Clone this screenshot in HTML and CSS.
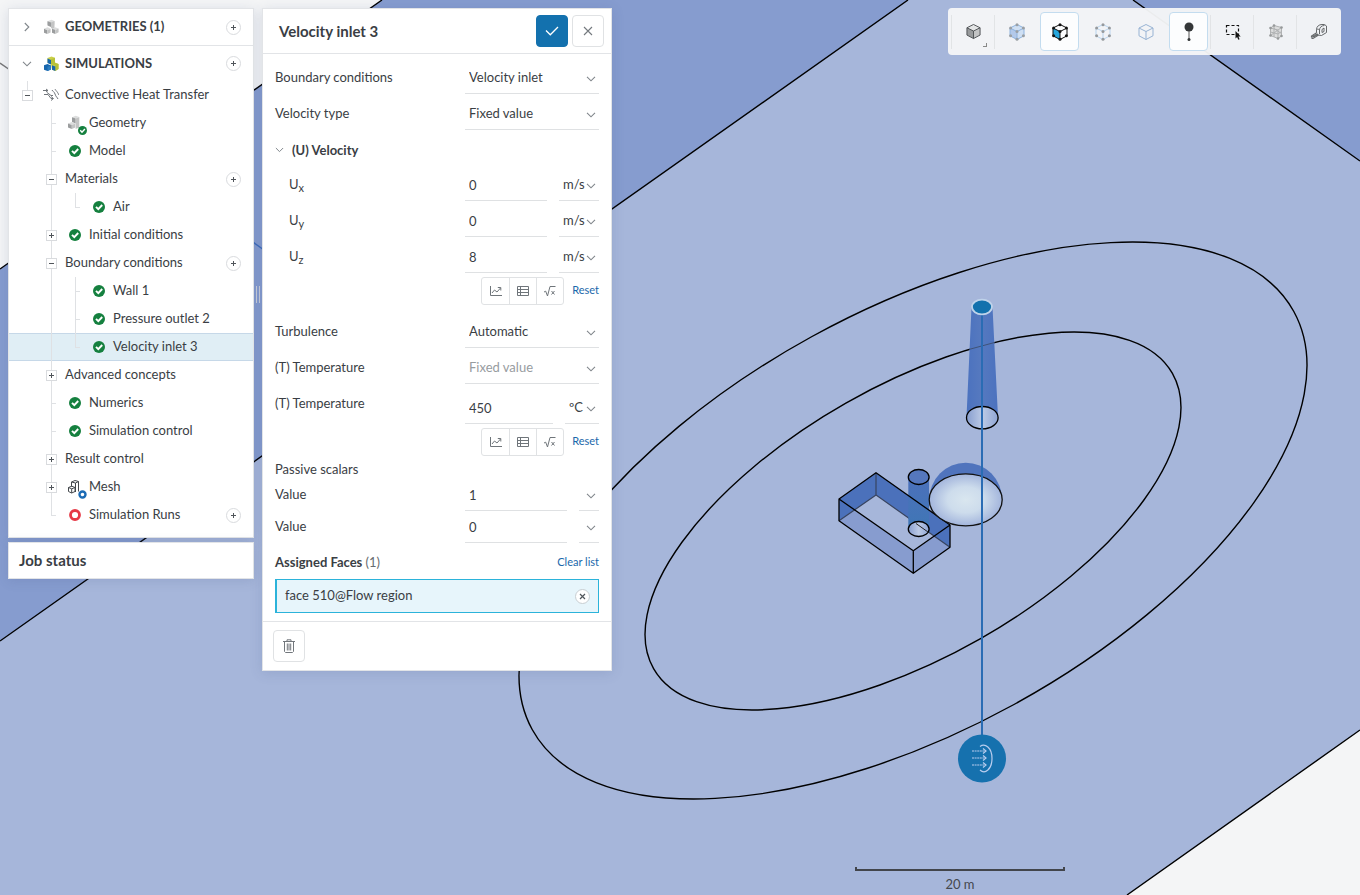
FILE: index.html
```html
<!DOCTYPE html>
<html lang="en">
<head>
<meta charset="utf-8">
<meta name="viewport" content="width=device-width, initial-scale=1">
<title>Simulation setup</title>
<link rel="stylesheet" href="styles.css">
</head>
<body>
<svg class="defs" width="0" height="0" aria-hidden="true">
  <symbol id="chev" viewBox="0 0 10 6"><path d="M1 .8l4 4 4-4" fill="none" stroke="#80868b" stroke-width="1.1"/></symbol>
  <symbol id="plus" viewBox="0 0 5 5"><path d="M2.500 0v5M0 2.500h5" fill="none" stroke="#50555a"/></symbol>
  <symbol id="ok" viewBox="0 0 12 12"><circle cx="6" cy="6" r="6" fill="#15803f"/><path d="M3 5.800l2.300 2.400 3.900-4.200" fill="none" stroke="#fff" stroke-width="1.900"/></symbol>
  <symbol id="cubes" viewBox="0 0 16 16">
    <path class="c-top" d="M4.500 2.200L8.500.8l3 1.200v3.500l-3.500 1.500-3.500-1.300z"/>
    <path class="c-a" d="M4.500 2.200l3.500 1.300v4.500l-3.500-1.400z"/>
    <path class="c-b" d="M8 3.500L11.500 2v9L8 9z"/>
    <path class="c-top" d="M1 9.700l3.600-1.400 3 1.400-3.300 1.500zM9 9.700l3-1.400 3.600 1.200-3.300 1.600z"/>
    <path class="c-a" d="M1 9.700l3.300 1.500V15L1 13.800zM9 9.700l3.300 1.400V15L9 13.700z"/>
    <path class="c-b" d="M4.300 11.200l3.300-1.500v3.800L4.300 15zM12.300 11.100l3.300-1.600v3.800L12.300 15z"/>
  </symbol>
  <symbol id="sims" viewBox="0 0 16 16">
    <path d="M4.500 2L8.500.5l3.500 1.300v4.700l3.500 1.500v5L12.300 15 9 13.700 8 8.500 4.500 6.500z" fill="#cbd04a"/>
    <path d="M8 3.300L12 1.800V7l3.500 1v5L12.300 15V9.500L8 8z" fill="#b7c139"/>
    <path d="M4.500 2.600L8 4v4.600L4.500 7z" fill="#1766ad"/>
    <path d="M1 9.300L4.500 8l3.500 1.500v4L4.500 15 1 13.700z" fill="#1766ad"/>
    <path d="M4.500 10.800L8 9.500v4L4.500 15z" fill="#2b7dc0"/>
    <path d="M9 9.300l3.300 1.300V15L9 13.700z" fill="#1766ad"/>
  </symbol>
  <symbol id="geo" viewBox="0 0 16 16">
    <path class="c-top" d="M5 2.200L8.700.8l3.600 1.200-3.600 1.500z"/>
    <path class="c-a" d="M5 2.200l3.700 1.300v5L5 7z"/>
    <path class="c-b" d="M8.700 3.500L12.300 2v10.500L8.700 14z"/>
    <path class="c-top" d="M1 8.500L4.800 7l3.500 1.500-3.500 1.600z"/>
    <path class="c-a" d="M1 8.500l3.800 1.600v4L1 12.600z"/>
    <path class="c-b" d="M4.800 10.100l3.500-1.600v4l-3.500 1.600z"/>
  </symbol>
  <symbol id="chart" viewBox="0 0 14 12"><path d="M1.500 1v9.500H13" fill="none" stroke="#6f757a"/><path d="M3 8l2.500-3L8 7l3.500-4M8.800 2.500h3v3" fill="none" stroke="#6f757a"/></symbol>
  <symbol id="table" viewBox="0 0 14 12"><path d="M1.500 1.500h11v9h-11zM1.500 4.500h11M1.500 7.500h11M4.500 1.500v9" fill="none" stroke="#6f757a"/></symbol>
  <symbol id="root" viewBox="0 0 14 12"><path d="M1 7l1.700-.8L4.500 11 7 1.500h5.500M8.500 6l3 3.500M11.500 6l-3 3.500" fill="none" stroke="#6f757a"/></symbol>
  <symbol id="wire" viewBox="0 0 16 18"><path d="M8 1.500l7 3.500v7.800L8 16.500 1 12.800V5zM1 5l7 3.500L15 5M8 8.500v8" fill="none" stroke="currentColor"/></symbol>
  <symbol id="dots" viewBox="0 0 16 18"><g fill="currentColor"><circle cx="8" cy="1.700" r="1.500"/><circle cx="14.400" cy="5" r="1.500"/><circle cx="14.400" cy="12.700" r="1.500"/><circle cx="8" cy="16.300" r="1.500"/><circle cx="1.600" cy="12.700" r="1.500"/><circle cx="1.600" cy="5" r="1.500"/><circle cx="8" cy="8.500" r="1.500"/></g></symbol>
</svg>

<main class="workspace">
  <svg class="scene" viewBox="0 0 1360 895" preserveAspectRatio="xMidYMid slice" role="img" aria-label="3D model of the flow region">
    <defs>
      <radialGradient id="dome"><stop offset="0" stop-color="#d9e6ef"/><stop offset=".5" stop-color="#cddcec"/><stop offset="1" stop-color="#a3b5dc"/></radialGradient>
      <linearGradient id="pipe"><stop offset="0" stop-color="#879ecf"/><stop offset=".5" stop-color="#bccae5"/><stop offset="1" stop-color="#8fa5d4"/></linearGradient>
      <linearGradient id="stack"><stop offset="0" stop-color="#4b72bf"/><stop offset=".45" stop-color="#5679bf"/><stop offset="1" stop-color="#4b72bf"/></linearGradient>
      <linearGradient id="tube" x2="0" y2="1"><stop offset="0" stop-color="#4b70bb"/><stop offset=".5" stop-color="#4574b8"/><stop offset="1" stop-color="#3c77b4"/></linearGradient>
    </defs>
    <rect width="1360" height="895" fill="#f4f5f6"/>
    <path d="M0 269L382 0h978v730l-233 165H0z" fill="#869ccf"/>
    <path d="M0 641L908 0h225l227 161v569l-233 165H0z" fill="#a6b6da"/>
    <path d="M0 63l10 7" stroke="#777" stroke-width="1.500"/>
    <path d="M250 240l14 10" stroke="#3d6cba" stroke-width="1.500"/>
    <g fill="none" stroke="#000" stroke-width="1.400">
      <path d="M0 269L382 0M0 641L908 0M1133 0l227 161M1127 895l233-165"/>
      <ellipse cx="913" cy="520.500" rx="434.400" ry="209.900" transform="rotate(-28.760 913 520.500)"/>
      <ellipse cx="913" cy="521" rx="298.500" ry="135.700" transform="rotate(-29.650 913 521)"/>
    </g>
    <path d="M971.500 307L966.500 417a16 11.300 0 0 1 31.500 0L992.500 307z" fill="url(#stack)"/>
    <path d="M969.500 349.300L994.500 342.500" fill="none" stroke="#3f5378"/>
    <ellipse cx="982.300" cy="417.700" rx="15.800" ry="11.200" fill="url(#pipe)" stroke="#000" stroke-width="1.300"/>
    <path d="M839 499v21.700l74.300 52.600V550.700zM913.300 550.700v22.600L950 547.300V525z" fill="#879ccf"/>
    <path d="M839 499l37-26.300V495l-37 25.700zM876 472.700L950 525v22.300L876 495z" fill="#4b71bb"/>
    <path d="M876 473v22l74 52.300M876 495l-37 25.700" fill="none" stroke="#38445f" stroke-width="1.200"/>
    <path d="M908.300 477v52a10.400 7.500 0 0 0 20.800 0v-52z" fill="url(#tube)"/>
    <ellipse cx="918.700" cy="529" rx="10.400" ry="7.500" fill="url(#pipe)" stroke="#000" stroke-width="1.300"/>
    <path d="M916 523.500l12 8.500" stroke="#222"/>
    <ellipse cx="918.700" cy="477" rx="10.400" ry="7.500" fill="#5577bd" stroke="#000" stroke-width="1.300"/>
    <path d="M839 499v21.700l74.300 52.600L950 547.300V525l-74-52.300L839 499l74.300 51.700L950 525M913.300 550.700v22.600" fill="none" stroke="#000" stroke-width="1.300" stroke-linejoin="round"/>
    <path d="M929.200 500a36.500 37.300 0 0 1 73 0z" fill="#5074bd"/>
    <ellipse cx="965.700" cy="499.800" rx="36.500" ry="26" fill="url(#dome)" stroke="#111" stroke-width="1.300"/>
    <path d="M982 306v430" stroke="#2a6cb4" stroke-width="2"/>
    <ellipse cx="982" cy="307" rx="10" ry="7.300" fill="#1271ad" stroke="#bfd3ea" stroke-width="1.800"/>
    <circle cx="982" cy="758.500" r="24" fill="#1671ae"/>
    <g fill="none" stroke="#b9cdee" stroke-width="1.200">
      <path d="M980 746.500c5-3.500 12 1 12 12s-7 16-12 11.500"/>
      <path d="M972 751h14M972 758h14M972 765h14" stroke-dasharray="2 .6"/>
      <path d="M983 748.500l3 2.500-3 2.500M983 755.500l3 2.500-3 2.500M983 762.500l3 2.500-3 2.500"/>
    </g>
    <path d="M856 867v3h208v-3" fill="none" stroke="#42454b" stroke-width="2"/>
    <text class="scale-text" x="960" y="889" text-anchor="middle">20 m</text>
  </svg>

  <div class="overlay">
    <aside class="side">
      <nav class="panel tree" aria-label="Project tree">
        <div class="head first"><span class="cell"><svg class="turn" width="10" height="6"><use href="#chev"/></svg></span><span class="cell"><svg class="grey" width="16" height="16"><use href="#cubes"/></svg></span><b>GEOMETRIES (1)</b><button class="add" aria-label="Add geometry"><svg width="5" height="5"><use href="#plus"/></svg></button></div>
        <div class="head"><span class="cell"><svg width="10" height="6"><use href="#chev"/></svg></span><span class="cell"><svg width="16" height="16"><use href="#sims"/></svg></span><b>SIMULATIONS</b><button class="add" aria-label="Add simulation"><svg width="5" height="5"><use href="#plus"/></svg></button></div>
        <div class="row"><span class="cell up"><button class="tog" aria-label="Collapse"></button></span><span class="cell"><svg width="16" height="14" viewBox="0 0 16 14" fill="none" stroke="#70757a"><path d="M0 2.500h5M3 1l2 1.500L3 4M1 6.500h4l3 4h2M8 8.500l2.500 2L8 12.500M4 4.500l4 3h2M9 2c1 2 2 1 3 4s2 3 3 5M12 1c1 2 2 2 4 6"/></svg></span><span>Convective Heat Transfer</span></div>
        <div class="row"><span class="cell"></span><span class="cell line tee"></span><span class="cell badge-host"><svg class="grey" width="16" height="16"><use href="#geo"/></svg><svg class="badge" width="9" height="9"><use href="#ok"/></svg></span><span>Geometry</span></div>
        <div class="row"><span class="cell"></span><span class="cell line tee"></span><span class="cell"><svg width="12" height="12"><use href="#ok"/></svg></span><span>Model</span></div>
        <div class="row"><span class="cell"></span><span class="cell line"><button class="tog" aria-label="Collapse"></button></span><span>Materials</span><button class="add" aria-label="Add material"><svg width="5" height="5"><use href="#plus"/></svg></button></div>
        <div class="row"><span class="cell"></span><span class="cell line"></span><span class="cell end"></span><span class="cell"><svg width="12" height="12"><use href="#ok"/></svg></span><span>Air</span></div>
        <div class="row"><span class="cell"></span><span class="cell line"><button class="tog more" aria-label="Expand"></button></span><span class="cell"><svg width="12" height="12"><use href="#ok"/></svg></span><span>Initial conditions</span></div>
        <div class="row"><span class="cell"></span><span class="cell line"><button class="tog" aria-label="Collapse"></button></span><span>Boundary conditions</span><button class="add" aria-label="Add boundary condition"><svg width="5" height="5"><use href="#plus"/></svg></button></div>
        <div class="row"><span class="cell"></span><span class="cell line"></span><span class="cell line tee"></span><span class="cell"><svg width="12" height="12"><use href="#ok"/></svg></span><span>Wall 1</span></div>
        <div class="row"><span class="cell"></span><span class="cell line"></span><span class="cell line tee"></span><span class="cell"><svg width="12" height="12"><use href="#ok"/></svg></span><span>Pressure outlet 2</span></div>
        <div class="row selected"><span class="cell"></span><span class="cell line"></span><span class="cell end"></span><span class="cell"><svg width="12" height="12"><use href="#ok"/></svg></span><span>Velocity inlet 3</span></div>
        <div class="row"><span class="cell"></span><span class="cell line"><button class="tog more" aria-label="Expand"></button></span><span>Advanced concepts</span></div>
        <div class="row"><span class="cell"></span><span class="cell line tee"></span><span class="cell"><svg width="12" height="12"><use href="#ok"/></svg></span><span>Numerics</span></div>
        <div class="row"><span class="cell"></span><span class="cell line tee"></span><span class="cell"><svg width="12" height="12"><use href="#ok"/></svg></span><span>Simulation control</span></div>
        <div class="row"><span class="cell"></span><span class="cell line"><button class="tog more" aria-label="Expand"></button></span><span>Result control</span></div>
        <div class="row"><span class="cell"></span><span class="cell line"><button class="tog more" aria-label="Expand"></button></span><span class="cell badge-host"><svg width="16" height="16" viewBox="0 0 16 16" fill="none" stroke="#45494d"><path d="M4.500 3L8 1.500l3.500 1L8.500 4zM4.500 3v4.500M8.500 4v9M11.500 2.500v10M1.500 8.500l3.300-1.300L8 8.500l-3.300 1.300zM1.500 8.500v4l3.200 1.500V9.800M4.700 14L8 12.500v-4"/></svg><svg class="badge" width="9" height="9" viewBox="0 0 9 9"><circle cx="4.500" cy="4.500" r="3" fill="#fff" stroke="#1b6bb5" stroke-width="2.400"/></svg></span><span>Mesh</span></div>
        <div class="row"><span class="cell"></span><span class="cell end"></span><span class="cell"><svg width="12" height="12" viewBox="0 0 12 12"><circle cx="6" cy="6" r="4.500" fill="#fff" stroke="#e63946" stroke-width="2.800"/></svg></span><span>Simulation Runs</span><button class="add" aria-label="Add run"><svg width="5" height="5"><use href="#plus"/></svg></button></div>
      </nav>
      <section class="panel job"><h2>Job status</h2></section>
    </aside>
    <div class="splitter" role="separator"></div>

    <form class="panel dialog">
      <header class="dialog-head">
        <h1>Velocity inlet 3</h1>
        <button type="button" class="square primary" aria-label="Apply"><svg width="14" height="10" viewBox="0 0 14 10"><path d="M1 4.500l4.300 4.300L13 1" fill="none" stroke="#fff" stroke-width="1.300"/></svg></button>
        <button type="button" class="square" aria-label="Close"><svg width="10" height="10" viewBox="0 0 10 10"><path d="M1 1l8 8M9 1L1 9" fill="none" stroke="#74797e" stroke-width="1.100"/></svg></button>
      </header>
      <div class="fields">
        <div class="field"><label for="bc">Boundary conditions</label><div class="control"><span class="pick"><select id="bc"><option>Velocity inlet</option></select><svg width="10" height="6"><use href="#chev"/></svg></span></div></div>
        <div class="field"><label for="vt">Velocity type</label><div class="control"><span class="pick"><select id="vt"><option>Fixed value</option></select><svg width="10" height="6"><use href="#chev"/></svg></span></div></div>
        <h3 class="group"><svg width="9" height="6"><use href="#chev"/></svg>(U) Velocity</h3>
        <div class="field nested"><label for="ux">U<sub>x</sub></label><div class="control"><input id="ux" value="0"><span class="pick unit"><select aria-label="Ux unit"><option>m/s</option></select><svg width="10" height="6"><use href="#chev"/></svg></span></div></div>
        <div class="field nested"><label for="uy">U<sub>y</sub></label><div class="control"><input id="uy" value="0"><span class="pick unit"><select aria-label="Uy unit"><option>m/s</option></select><svg width="10" height="6"><use href="#chev"/></svg></span></div></div>
        <div class="field nested"><label for="uz">U<sub>z</sub></label><div class="control"><input id="uz" value="8"><span class="pick unit"><select aria-label="Uz unit"><option>m/s</option></select><svg width="10" height="6"><use href="#chev"/></svg></span></div></div>
        <div class="tools gap-after"><div class="seg"><button type="button" aria-label="Chart"><svg width="14" height="12"><use href="#chart"/></svg></button><button type="button" aria-label="Table"><svg width="14" height="12"><use href="#table"/></svg></button><button type="button" aria-label="Formula"><svg width="14" height="12"><use href="#root"/></svg></button></div><a href="#">Reset</a></div>
        <div class="field"><label for="tu">Turbulence</label><div class="control"><span class="pick"><select id="tu"><option>Automatic</option></select><svg width="10" height="6"><use href="#chev"/></svg></span></div></div>
        <div class="field"><label for="tt">(T) Temperature</label><div class="control"><span class="pick"><select id="tt" disabled><option>Fixed value</option></select><svg width="10" height="6"><use href="#chev"/></svg></span></div></div>
        <div class="field tall"><label for="tv">(T) Temperature</label><div class="control"><input id="tv" value="450"><span class="pick unit-c"><select aria-label="Temperature unit"><option>ºC</option></select><svg width="10" height="6"><use href="#chev"/></svg></span></div></div>
        <div class="tools"><div class="seg"><button type="button" aria-label="Chart"><svg width="14" height="12"><use href="#chart"/></svg></button><button type="button" aria-label="Table"><svg width="14" height="12"><use href="#table"/></svg></button><button type="button" aria-label="Formula"><svg width="14" height="12"><use href="#root"/></svg></button></div><a href="#">Reset</a></div>
        <p class="subhead">Passive scalars</p>
        <div class="field short"><label for="p1">Value</label><div class="control"><input id="p1" value="1"><span class="pick unit-none"><select aria-label="Unit"><option></option></select><svg width="10" height="6"><use href="#chev"/></svg></span></div></div>
        <div class="field short"><label for="p2">Value</label><div class="control"><input id="p2" value="0"><span class="pick unit-none"><select aria-label="Unit"><option></option></select><svg width="10" height="6"><use href="#chev"/></svg></span></div></div>
        <div class="assigned"><h3>Assigned Faces <span>(1)</span></h3><a href="#">Clear list</a></div>
        <div class="chip"><span>face 510@Flow region</span><button type="button" class="remove" aria-label="Remove face"><svg width="7" height="7" viewBox="0 0 7 7"><path d="M1 1l5 5M6 1L1 6" fill="none" stroke="#50565b" stroke-width="1.200"/></svg></button></div>
      </div>
      <footer class="dialog-foot"><button type="button" class="square" aria-label="Delete"><svg width="12" height="14" viewBox="0 0 12 14" fill="none" stroke="#72777c"><path d="M0 2.500h12M4 2V.8h4V2M1.500 2.500v10l1 1h7l1-1v-10M4.300 4.500v7M6 4.500v7M7.700 4.500v7"/></svg></button></footer>
    </form>

    <div class="toolbar" role="toolbar" aria-label="View tools">
      <div class="slot sep"><button class="tool corner" aria-label="Shading"><svg width="15" height="17" viewBox="0 0 16 18"><path d="M8 1.500L15 5 8 8.500 1 5z" fill="#e4e5e6"/><path d="M1 5l7 3.500v8L1 12.800z" fill="#989a9c"/><path d="M15 5L8 8.500v8l7-3.700z" fill="#c2c3c4"/><g color="#4c4f52"><use href="#wire"/></g></svg></button></div>
      <div class="slot sep"><button class="tool" aria-label="Select volumes"><svg width="16" height="18"><path d="M8 1.500l7 3.500v7.800L8 16.500 1 12.800V5z" fill="#cfdff3"/><path d="M1 5l7 3.500v8l-7-3.700z" fill="#b3c9ea"/><g color="#8eb3df"><use href="#wire"/></g><g color="#9a9fa4"><use href="#dots"/></g></svg></button></div>
      <div class="slot"><button class="tool active" aria-label="Select faces"><svg width="16" height="18"><path d="M1 5l7 3.500v8l-7-3.700z" fill="#25a6dc"/><g color="#111"><use href="#wire"/><use href="#dots"/></g></svg></button></div>
      <div class="slot"><button class="tool" aria-label="Select edges"><svg width="16" height="18"><g color="#b9d4ee"><use href="#wire"/></g><g color="#96999c"><use href="#dots"/></g></svg></button></div>
      <div class="slot"><button class="tool" aria-label="Select vertices"><svg width="16" height="18"><g color="#98b3d4"><use href="#wire"/></g></svg></button></div>
      <div class="slot"><button class="tool active" aria-label="Pins"><svg width="10" height="20" viewBox="0 0 10 20"><circle cx="5" cy="5" r="4.500" fill="#333638"/><path d="M5 9v8" stroke="#555"/><circle cx="5" cy="17.500" r="1.500" fill="#333638"/></svg></button></div>
      <div class="slot sep late"><button class="tool" aria-label="Box select"><svg width="16" height="16" viewBox="0 0 16 16"><path d="M1.500 1.500h12v9h-12z" fill="none" stroke="#111" stroke-width="1.200" stroke-dasharray="3 2"/><path d="M10.500 7v7.500l1.600-1.500 1.200 2.800 1.300-.6-1.200-2.700h2.300z" fill="#111"/></svg></button></div>
      <div class="slot sep"><button class="tool" aria-label="Mesh clip"><svg width="14" height="16" viewBox="0 0 14 16"><path d="M1.500 4L5 1.500l7.500 2v8.500L9 14.500l-7.500-3z" fill="#dcdddd"/><path d="M1.500 4L5 1.500l7.500 2L9 6zM1.500 4v7.500l7.500 3V6M12.500 3.500V12L9 14.500M5 1.500v11.500M1.500 8L9 10l3.500-2.500M1.500 11.500L9 6M5 4.500l7.500 5" fill="none" stroke="#b0b2b3"/><g fill="#96999a"><circle cx="1.500" cy="4" r="1.300"/><circle cx="5" cy="1.500" r="1.300"/><circle cx="12.500" cy="3.500" r="1.300"/><circle cx="9" cy="14.500" r="1.300"/><circle cx="1.500" cy="11.500" r="1.300"/><circle cx="12.500" cy="12" r="1.300"/></g></svg></button></div>
      <div class="slot sep"><button class="tool" aria-label="Measure"><svg width="18" height="18" viewBox="0 0 18 18" fill="none" stroke="#66696b"><path d="M6.500 9.500V6.500C6.500 3.500 9 1.500 12 1.500h2.500l2 1.500v6.500l-5 3-3.500-.5M6.500 6.500c1-.5 2-.5 3 .5M9.500 11V7c0-2.500 2-4.500 5-4.500"/><path d="M12 6.500l2-1.500v3.500l-2 1z"/><path d="M7 9.500L1.500 13v1.500M8.500 12L3 15.500H1.500M3.500 12l1.500 2.500M5.500 10.800L7 13M1.500 14.500L8 11" stroke-width="1.200"/></svg></button></div>
    </div>
  </div>
</main>
</body>
</html>
```
FILE: styles.css
```css
* { box-sizing: border-box; }
body { margin: 0; font: 13px/20px Lato, "Liberation Sans", sans-serif; color: #3a3e44; }
button, input, select { font: inherit; color: inherit; margin: 0; padding: 0; border: 0; background: none; border-radius: 0; }
h1, h2, h3, p { margin: 0; font-size: inherit; }
a { color: #1a68ab; text-decoration: none; font-size: 11px; }
svg { display: block; flex: none; }
.defs { position: absolute; }

.workspace { position: relative; min-height: 100vh; overflow: hidden; }
.scene { position: absolute; inset: 0; width: 100%; height: 100%; }
.scale-text { font-size: 13px; fill: #44474c; }
.overlay { position: relative; display: flex; align-items: flex-start; padding: 8px 19px 8px 8px; }
.panel { background: #fff; border: 1px solid #e2e4e7; box-shadow: 0 2px 12px rgba(60, 80, 130, .16); }

/* project tree */
.side { width: 246px; display: grid; gap: 4px; }
.tree { padding-bottom: 8px; }
.head, .row { display: flex; align-items: center; padding: 0 12px 0 6px; }
.head { height: 35px; }
.head.first { height: 37px; border-bottom: 1px solid #e2e4e7; }
.head b { padding: 0 0 2px 2px; }
.row { height: 28px; line-height: 26px; }
.row > span:not(.cell) { padding: 0 0 2px 2px; }
.cell { width: 24px; align-self: stretch; flex: none; display: grid; place-items: center; }
.cell.line { background: linear-gradient(#dfe1e4, #dfe1e4) 12px 0 / 1px 100% no-repeat; }
.cell.tee { background: linear-gradient(#dfe1e4, #dfe1e4) 12px 0 / 1px 100% no-repeat, linear-gradient(#dfe1e4, #dfe1e4) 12px 14px / 5px 1px no-repeat; }
.cell.end { background: linear-gradient(#dfe1e4, #dfe1e4) 12px 0 / 1px 14px no-repeat, linear-gradient(#dfe1e4, #dfe1e4) 12px 14px / 5px 1px no-repeat; }
.cell.up { background: linear-gradient(#dfe1e4, #dfe1e4) 12px 0 / 1px 10px no-repeat; }
.selected { background: #e0eef5; box-shadow: inset 0 1px #c6d8e8, inset 0 -1px #c6d8e8; }
.tog { width: 11px; height: 11px; border: 1px solid #d9dbde; background: linear-gradient(#50555a, #50555a) center / 5px 1px no-repeat #fff; }
.tog.more { background: linear-gradient(#50555a, #50555a) center / 5px 1px no-repeat, linear-gradient(#50555a, #50555a) center / 1px 5px no-repeat #fff; }
.add { width: 15px; height: 15px; margin-left: auto; border: 1px solid #d9dbde; border-radius: 50%; display: grid; place-items: center; }
.turn { transform: rotate(-90deg); }
.badge-host { position: relative; }
.badge { position: absolute; right: 0; bottom: 2px; }
.grey { --t: #dcdddd; --a: #9b9d9e; --b: #c3c4c4; }
.c-top { fill: var(--t); }
.c-a { fill: var(--a); }
.c-b { fill: var(--b); }
.job { padding: 7px 10px 8px; }
.job h2 { font-size: 15px; }
.splitter { width: 4px; height: 17px; margin: 278px 2px 0; border: 1px solid #c5cad6; border-width: 0 1px; }

/* boundary condition form */
.dialog { width: 350px; }
.dialog-head { display: flex; align-items: center; gap: 4px; height: 45px; padding: 0 7px 0 16px; border-bottom: 1px solid #e2e4e7; }
.dialog-head h1 { flex: 1; font-size: 15px; }
.square { width: 32px; height: 32px; border: 1px solid #e0e2e4; border-radius: 4px; display: grid; place-items: center; }
.primary { background: #1371ae; border-color: #1371ae; }
.fields { padding: 4px 12px 8px; }
.field { display: flex; align-items: flex-end; height: 36px; }
.field.nested { padding-left: 14px; }
.field label { flex: 1; height: 27px; }
.field.short { height: 32px; }
.field.tall { height: 40px; }
.field.tall label { height: 31px; }
.control { width: 134px; display: flex; gap: 12px; }
.control input, .pick { height: 30px; border-bottom: 1px solid #dfe1e3; }
.control input { flex: 1; min-width: 0; padding: 0 0 1px 4px; }
.pick { flex: 1; display: grid; grid-template-columns: 1fr 13px; align-items: center; }
.pick select { grid-area: 1 / 1 / 2 / 3; width: 100%; padding: 0 0 4px 4px; appearance: none; opacity: 1; }
.pick select:disabled { color: #979c9f; }
.pick svg { grid-area: 1 / 2; pointer-events: none; }
.unit { flex: none; width: 40px; }
.unit-c { flex: none; width: 34px; }
.unit-none { flex: none; width: 20px; }
sub { font-size: 11px; line-height: 0; vertical-align: -3px; }
.group { display: flex; align-items: center; gap: 8px; height: 35px; padding-top: 5px; }
.tools { display: flex; justify-content: flex-end; gap: 8px; padding-top: 4px; line-height: 26px; }
.gap-after { padding-bottom: 7px; }
.seg { display: flex; border: 1px solid #e0e2e4; border-radius: 3px; }
.seg button { width: 27px; height: 26px; display: grid; place-items: center; border-left: 1px solid #e0e2e4; }
.seg button:first-child { border-left: 0; }
.subhead { padding-top: 3px; }
.assigned { display: flex; justify-content: space-between; align-items: center; height: 36px; padding-top: 2px; }
.assigned h3 span { font-weight: 400; color: #666b70; }
.chip { display: flex; align-items: center; justify-content: space-between; height: 34px; padding: 0 8px; border: 1px solid #2bb3da; border-left-width: 2px; background: #e7f5fb; }
.chip span { padding-bottom: 2px; }
.remove { width: 15px; height: 15px; border: 1px solid #c8ced2; border-radius: 50%; background: #fff; display: grid; place-items: center; }
.dialog-foot { padding: 8px 10px; border-top: 1px solid #e2e4e7; }

/* view tools */
.toolbar { display: flex; align-items: center; height: 47px; margin-left: auto; padding: 0 2px 0 3px; border-radius: 4px; background: rgba(245, 246, 247, .96); }
.slot { width: 43px; padding: 0 1px 0 2px; display: flex; align-items: center; height: 34px; border-left: 1px solid transparent; }
.slot.sep { border-left-color: #e2e4e6; }
.slot.late { margin-left: 1px; }
.tool { width: 39px; height: 39px; border-radius: 4px; border: 1px solid transparent; display: grid; place-items: center; }
.tool.active { background: #fcfdfe; border-color: #c3dcef; }
.corner { background: linear-gradient(#888, #888) 31px 30px / 1px 4px no-repeat, linear-gradient(#888, #888) 28px 33px / 4px 1px no-repeat; }
```
